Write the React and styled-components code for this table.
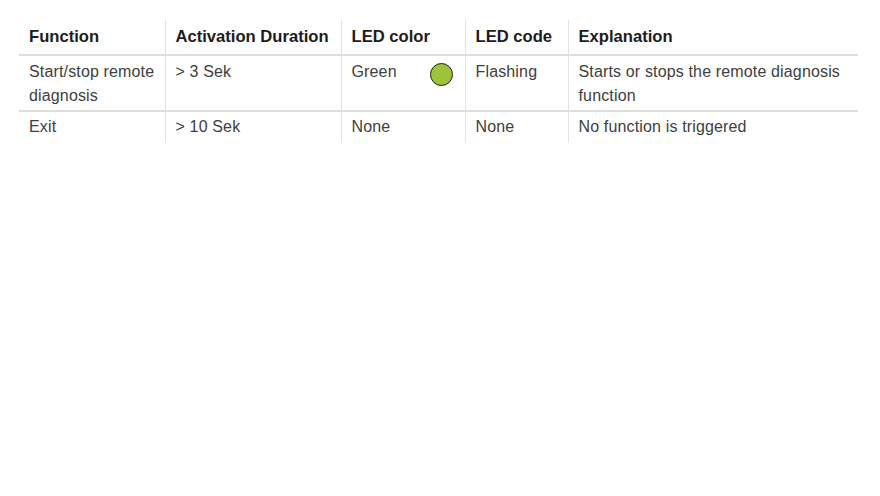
import React from 'react';
import styled, { createGlobalStyle } from 'styled-components';

const GlobalStyle = createGlobalStyle`
  html, body {
    margin: 0;
    padding: 0;
    background: #fff;
  }
  body {
    font-family: "Liberation Sans", Arial, Helvetica, sans-serif;
  }
`;

const Page = styled.div`
  width: 880px;
  height: 496px;
  padding: 20px 22px 0 19px;
  box-sizing: border-box;
`;

const Table = styled.table`
  width: 839px;
  border-collapse: collapse;
  table-layout: fixed;
  line-height: 24px;
`;

const HeadCell = styled.th`
  text-align: left;
  font-size: 16.6px;
  font-weight: 700;
  color: #1c1c1c;
  padding: 5px 6px 5px 10px;
  border-bottom: 2px solid #dedede;
  border-left: ${p => (p.first ? 'none' : '1px solid #e4e4e4')};
  vertical-align: top;
`;

const Cell = styled.td`
  font-size: 16px;
  letter-spacing: 0.15px;
  color: #404040;
  padding: ${p => (p.last ? '3px 6px 4px 10px' : '4px 6px 2px 10px')};
  border-bottom: ${p => (p.last ? 'none' : '2px solid #dedede')};
  border-left: ${p => (p.first ? 'none' : '1px solid #e4e4e4')};
  vertical-align: top;
`;

const ColorWrap = styled.div`
  display: flex;
  justify-content: space-between;
  align-items: flex-start;
  padding-right: 6px;
`;

const Led = styled.span`
  display: block;
  width: 21px;
  height: 21px;
  margin-top: 3px;
  border-radius: 50%;
  background: ${p => p.color};
  border: 1.5px solid #1e2410;
`;

const columns = [
  { label: 'Function', width: 146 },
  { label: 'Activation Duration', width: 176 },
  { label: 'LED color', width: 124 },
  { label: 'LED code', width: 103 },
  { label: 'Explanation', width: 290 },
];

const rows = [
  {
    fn: 'Start/stop remote diagnosis',
    duration: '> 3 Sek',
    color: 'Green',
    led: '#9cc33a',
    code: 'Flashing',
    text: 'Starts or stops the remote diagnosis function',
  },
  {
    fn: 'Exit',
    duration: '> 10 Sek',
    color: 'None',
    code: 'None',
    text: 'No function is triggered',
  },
];

export default function App() {
  return (
    <Page>
      <GlobalStyle />
      <Table>
        <colgroup>
          {columns.map(c => (
            <col key={c.label} style={{ width: c.width }} />
          ))}
        </colgroup>
        <thead>
          <tr>
            {columns.map((c, i) => (
              <HeadCell key={c.label} first={i === 0}>
                {c.label}
              </HeadCell>
            ))}
          </tr>
        </thead>
        <tbody>
          {rows.map((r, idx) => {
            const last = idx === rows.length - 1;
            return (
              <tr key={r.fn}>
                <Cell first last={last}>{r.fn}</Cell>
                <Cell last={last}>{r.duration}</Cell>
                <Cell last={last}>
                  <ColorWrap>
                    <span>{r.color}</span>
                    {r.led && <Led color={r.led} />}
                  </ColorWrap>
                </Cell>
                <Cell last={last}>{r.code}</Cell>
                <Cell last={last}>{r.text}</Cell>
              </tr>
            );
          })}
        </tbody>
      </Table>
    </Page>
  );
}
